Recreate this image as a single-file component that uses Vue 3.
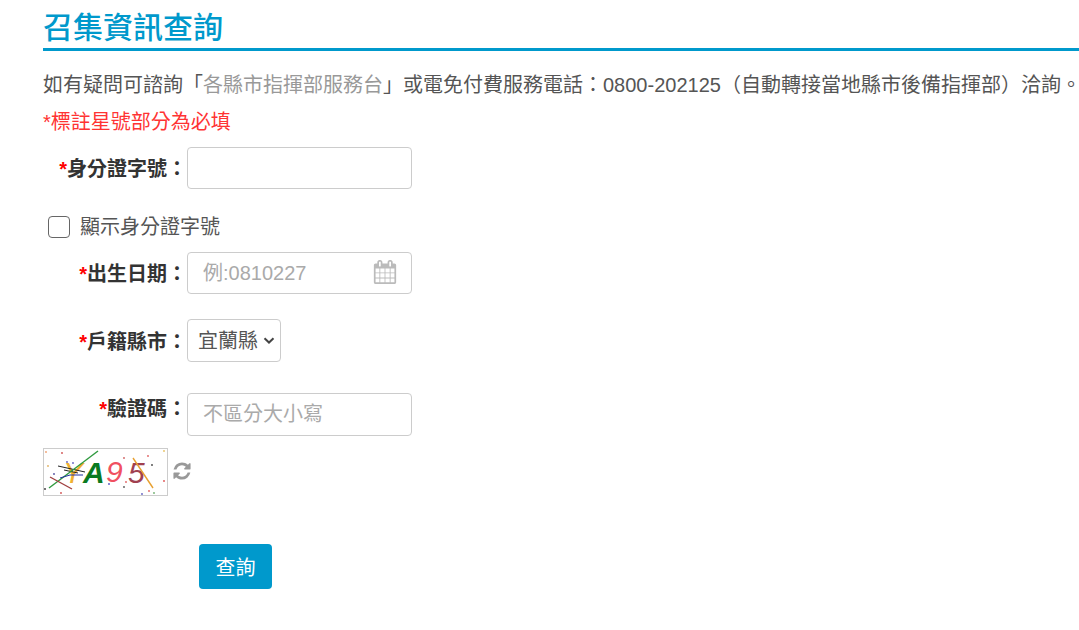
<script setup>
import { ref } from 'vue'

const idNo = ref('')
const showId = ref(false)
const birth = ref('')
const city = ref('宜蘭縣')
const code = ref('')
const cities = ['宜蘭縣', '臺北市', '新北市', '桃園市']

const noiseDots = [
    [2, 3, '#f0a070'], [18, 4, '#d05050'], [120, 2, '#e8c060'], [104, 7, '#e06060'], [80, 9, '#d06060'],
    [4, 17, '#e0b060'], [10, 25, '#5050a0'], [23, 13, '#6060c0'], [29, 14, '#6060c0'], [108, 16, '#444'],
    [120, 32, '#e05050'], [82, 33, '#e06060'], [80, 38, '#555'], [1, 40, '#333'], [105, 42, '#e06060'],
    [110, 44, '#70b070'], [98, 45, '#6060c0'], [17, 44, '#d05050'], [65, 35, '#5050c0']
]
</script>

<template>
    <div class="page">
        <h2 class="title">召集資訊查詢</h2>
        <p class="intro">如有疑問可諮詢「<a class="link">各縣市指揮部服務台</a>」或電免付費服務電話：0800-202125（自動轉接當地縣市後備指揮部）洽詢<span class="end-mark">。</span></p>
        <p class="required-note">*標註星號部分為必填</p>

        <form class="query-form" @submit.prevent>
            <div class="row row-id">
                <label class="label"><span class="star">*</span>身分證字號：</label>
                <input class="field" type="text" v-model="idNo" />
            </div>

            <label class="show-id">
                <input class="check" type="checkbox" v-model="showId" />
                <span class="show-text">顯示身分證字號</span>
            </label>

            <div class="row row-birth">
                <label class="label"><span class="star">*</span>出生日期：</label>
                <div class="date-wrap">
                    <input class="field" type="text" placeholder="例:0810227" v-model="birth" />
                    <svg class="cal-icon" viewBox="0 0 1792 1792" width="24" height="24">
                        <path fill="#bbb" d="M192 1664h288v-288h-288v288zm352 0h320v-288h-320v288zm-352-352h288v-320h-288v320zm352 0h320v-320h-320v320zm-352-384h288v-288h-288v288zm736 736h320v-288h-320v288zm-384-736h320v-288h-320v288zm768 736h288v-288h-288v288zm-384-352h320v-320h-320v320zm-352-864v-288q0-13-9.500-22.500t-22.500-9.500h-64q-13 0-22.500 9.500t-9.500 22.500v288q0 13 9.500 22.500t22.500 9.500h64q13 0 22.500-9.500t9.500-22.500zm736 864h288v-320h-288v320zm-384-384h320v-288h-320v288zm384 0h288v-288h-288v288zm32-480v-288q0-13-9.500-22.500t-22.500-9.500h-64q-13 0-22.500 9.500t-9.500 22.500v288q0 13 9.500 22.500t22.500 9.500h64q13 0 22.500-9.500t9.500-22.500zm384-64v1280q0 52-38 90t-90 38h-1408q-52 0-90-38t-38-90v-1280q0-52 38-90t90-38h128v-96q0-66 47-113t113-47h64q66 0 113 47t47 113v96h384v-96q0-66 47-113t113-47h64q66 0 113 47t47 113v96h128q52 0 90 38t38 90z" />
                    </svg>
                </div>
            </div>

            <div class="row row-city">
                <label class="label"><span class="star">*</span>戶籍縣市：</label>
                <div class="city-wrap">
                    <select class="city" v-model="city">
                        <option v-for="c in cities" :key="c">{{ c }}</option>
                    </select>
                    <svg class="chevron" viewBox="0 0 12 7" width="12" height="7">
                        <path d="M1.500 1.200L6 5.500l4.500-4.300" fill="none" stroke="#444" stroke-width="2" />
                    </svg>
                </div>
            </div>

            <div class="row row-code">
                <label class="label label-code"><span class="star">*</span>驗證碼：</label>
                <input class="field field-code" type="text" placeholder="不區分大小寫" v-model="code" />
            </div>

            <div class="captcha-row">
                <svg class="captcha" viewBox="0 0 123 46" width="125" height="48">
                    <rect width="123" height="46" fill="#fff" />
                    <circle v-for="(d, i) in noiseDots" :key="i" :cx="d[0]" :cy="d[1]" r="0.9" :fill="d[2]" />
                    <text x="19" y="34" class="cap-y">Y</text>
                    <text x="39" y="34" class="cap-a">A</text>
                    <text x="62" y="33" class="cap-9">9</text>
                    <text x="84" y="34" class="cap-5">5</text>
                    <path stroke="#222" stroke-width="1" fill="none" d="M14 17l27 6M20 21l14 3" />
                    <path stroke="#2f9a3f" stroke-width="1.400" fill="none" d="M5 39L54 2" />
                    <path stroke="#a04040" stroke-width="1.400" fill="none" d="M6 28l22 12" />
                    <path stroke="#2030a0" stroke-width="1" fill="none" d="M16 29l10-3h13" />
                    <path stroke="#e8a030" stroke-width="1.400" fill="none" d="M89 9l20 30" />
                </svg>
                <svg class="refresh" viewBox="0 0 1792 1792" width="20" height="20">
                    <path fill="#999" d="M1639 1056q0 5-1 7-64 268-268 434.5t-478 166.5q-146 0-282.5-55t-243.5-157l-129 129q-19 19-45 19t-45-19-19-45v-448q0-26 19-45t45-19h448q26 0 45 19t19 45-19 45l-137 137q71 66 161 102t187 36q134 0 250-65t186-179q11-17 53-117 8-23 30-23h192q13 0 22.5 9.500t9.500 22.500zm25-800v448q0 26-19 45t-45 19h-448q-26 0-45-19t-19-45 19-45l138-138q-148-137-349-137-134 0-250 65t-186 179q-11 17-53 117-8 23-30 23h-199q-13 0-22.500-9.500t-9.500-22.500v-7q65-268 270-434.500t480-166.500q146 0 284 55.500t245 156.500l130-129q19-19 45-19t45 19 19 45z" />
                </svg>
            </div>

            <div class="actions">
                <button class="submit" type="submit">查詢</button>
            </div>
        </form>
    </div>
</template>

<style>
html, body {
    margin: 0;
    background: #fff;
    overflow: hidden;
}
</style>

<style scoped>
.page {
    width: 1079px;
    height: 630px;
    box-sizing: border-box;
    overflow: hidden;
    padding-left: 43px;
    font-family: "Liberation Sans", "Noto Sans CJK TC", sans-serif;
    font-size: 20px;
    color: #555;
}

.title {
    margin: 0;
    height: 51px;
    box-sizing: border-box;
    border-bottom: 3px solid #0099cc;
    color: #0099cc;
    font-size: 30px;
    font-weight: 500;
    line-height: 55px;
}

.intro {
    margin: 21px 0 0;
    line-height: 27px;
    white-space: nowrap;
}

.end-mark {
    letter-spacing: -3px;
}

.link {
    color: #999;
}

.required-note {
    margin: 10px 0 0;
    line-height: 27px;
    color: #f33;
}

.query-form {
    display: flex;
    flex-direction: column;
}

.row {
    display: flex;
    align-items: center;
}

.row-id { margin-top: 11px; }
.row-birth { margin-top: 14px; }
.row-city { margin-top: 25px; }
.row-code { margin-top: 31px; }

.label {
    width: 144px;
    padding-bottom: 1px;
    text-align: right;
    font-weight: bold;
    color: #333;
    white-space: nowrap;
}

.label-code {
    padding-bottom: 14px;
}

.star {
    color: #f00;
}

.field {
    display: block;
    width: 225px;
    height: 42px;
    box-sizing: border-box;
    border: 1px solid #ccc;
    border-radius: 4px;
    padding: 0 15px;
    background: #fff;
    color: #555;
    font: inherit;
    outline: none;
}

.field-code {
    height: 43px;
}

.field::placeholder {
    color: #aaa;
    opacity: 1;
}

.show-id {
    display: flex;
    align-items: center;
    gap: 10px;
    margin: 27px 0 0 5px;
    height: 22px;
}

.show-text {
    padding-bottom: 3px;
}

.check {
    appearance: none;
    width: 22px;
    height: 22px;
    margin: 0;
    border: 1px solid #666;
    border-radius: 4px;
    background: #fff;
}

.date-wrap {
    position: relative;
}

.cal-icon {
    position: absolute;
    left: 186px;
    top: 8px;
}

.city-wrap {
    position: relative;
}

.city {
    display: block;
    appearance: none;
    width: 94px;
    height: 43px;
    box-sizing: border-box;
    border: 1px solid #ccc;
    border-radius: 4px;
    padding: 0 0 0 10px;
    background: #fff;
    color: #555;
    font: inherit;
    outline: none;
}

.chevron {
    position: absolute;
    left: 76px;
    top: 18px;
    pointer-events: none;
}

.captcha-row {
    display: flex;
    align-items: flex-start;
    gap: 4px;
    margin-top: 12px;
}

.captcha {
    display: block;
    box-sizing: border-box;
    border: 1px solid #ccc;
}

.refresh {
    margin-top: 13px;
}

.cap-y { font: italic 30px "Liberation Sans", sans-serif; fill: #f0b030; }
.cap-a { font: italic bold 30px "Liberation Sans", sans-serif; fill: #0a7a20; }
.cap-9 { font: italic 30px "Liberation Sans", sans-serif; fill: #f05060; }
.cap-5 { font: italic 30px "Liberation Sans", sans-serif; fill: #a04050; }

.actions {
    margin-top: 48px;
    padding-left: 156px;
}

.submit {
    width: 73px;
    height: 45px;
    border: none;
    border-radius: 4px;
    background: #0099cc;
    color: #fff;
    font: inherit;
    padding: 0;
}
</style>
